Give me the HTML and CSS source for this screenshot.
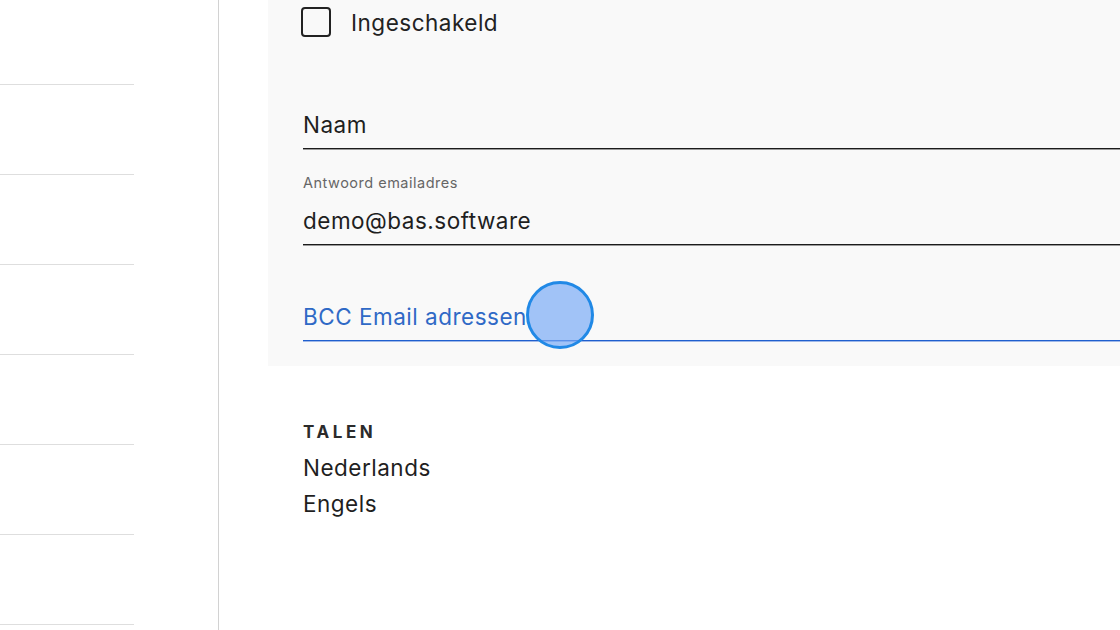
FILE: index.html
```html
<!DOCTYPE html>
<html lang="nl">
<head>
<meta charset="utf-8">
<title>Instellingen</title>
<link rel="stylesheet" href="styles.css">
</head>
<body>
<div class="layout">
  <aside class="sidebar">
    <ul class="nav-list">
      <li class="nav-item first"></li>
      <li class="nav-item"></li>
      <li class="nav-item"></li>
      <li class="nav-item"></li>
      <li class="nav-item"></li>
      <li class="nav-item"></li>
      <li class="nav-item"></li>
    </ul>
  </aside>
  <main class="main">
    <section class="panel">
      <label class="check-row">
        <span class="checkbox"></span>
        <span class="check-label">Ingeschakeld</span>
      </label>
      <div class="field">
        <span class="field-label hidden">Naam</span>
        <span class="field-value">Naam</span>
      </div>
      <div class="field">
        <span class="field-label">Antwoord emailadres</span>
        <span class="field-value">demo@bas.software</span>
      </div>
      <div class="field focused">
        <span class="field-label hidden">BCC Email adressen</span>
        <span class="field-value">BCC Email adressen</span>
      </div>
    </section>
    <section class="languages">
      <h3 class="section-title">TALEN</h3>
      <div class="lang">Nederlands</div>
      <div class="lang">Engels</div>
    </section>
  </main>
</div>
<div class="click-marker"></div>
</body>
</html>
```

FILE: styles.css
```css
html, body {
  margin: 0;
  padding: 0;
  background: #ffffff;
  width: 1120px;
  height: 630px;
  overflow: hidden;
  font-family: "Inter", "Noto Sans", sans-serif;
  color: #1f1f1f;
}

.layout {
  display: flex;
  height: 630px;
}

.sidebar {
  width: 218px;
  flex: none;
  border-right: 1px solid #d2d2d2;
}

.nav-list {
  list-style: none;
  margin: 0;
  padding: 0;
  width: 134px;
}

.nav-item {
  height: 89px;
  border-bottom: 1px solid #dedede;
}

.nav-item.first {
  height: 84px;
}

.main {
  flex: 1;
  padding-left: 49px;
  min-width: 0;
}

.panel {
  background: #f9f9f9;
  padding: 7px 0 25px 35px;
}

.check-row {
  display: flex;
  align-items: center;
  gap: 20px;
  height: 30px;
  margin-bottom: 16px;
  margin-left: -2px;
}

.checkbox {
  width: 26px;
  height: 26px;
  border: 2px solid #222222;
  border-radius: 4px;
  box-sizing: content-box;
}

.check-label {
  font-size: 22.5px;
  letter-spacing: 0.5px;
  color: #222222;
}

.field {
  display: flex;
  flex-direction: column;
  padding-top: 26px;
  height: 69px;
  border-bottom: 1px solid #1c1c1c;
  box-shadow: 0 1px 0 #9a9a9a;
}

.field-label {
  font-size: 14.5px;
  letter-spacing: 0.5px;
  line-height: 16px;
  height: 16px;
  color: #666666;
}

.field-label.hidden {
  visibility: hidden;
}

.field-value {
  margin-top: 15px;
  font-size: 22.5px;
  letter-spacing: 0.5px;
  line-height: 30px;
  color: #1f1f1f;
}

.field.focused {
  border-bottom-color: #1f5fce;
  box-shadow: 0 1px 0 #9fb8e8;
}

.field.focused .field-value {
  color: #2f69c6;
}

.languages {
  padding: 54px 0 0 35px;
}

.section-title {
  margin: 0;
  font-size: 17px;
  line-height: 24px;
  font-weight: 700;
  letter-spacing: 3.6px;
  color: #2b2b2b;
  margin-bottom: 6px;
}

.lang {
  font-size: 22.5px;
  letter-spacing: 0.5px;
  line-height: 36px;
  color: #1f1f1f;
}

.click-marker {
  position: absolute;
  left: 526px;
  top: 281px;
  width: 62px;
  height: 62px;
  border: 3px solid #2189e6;
  border-radius: 50%;
  background: rgba(120, 170, 246, 0.68);
}
```
